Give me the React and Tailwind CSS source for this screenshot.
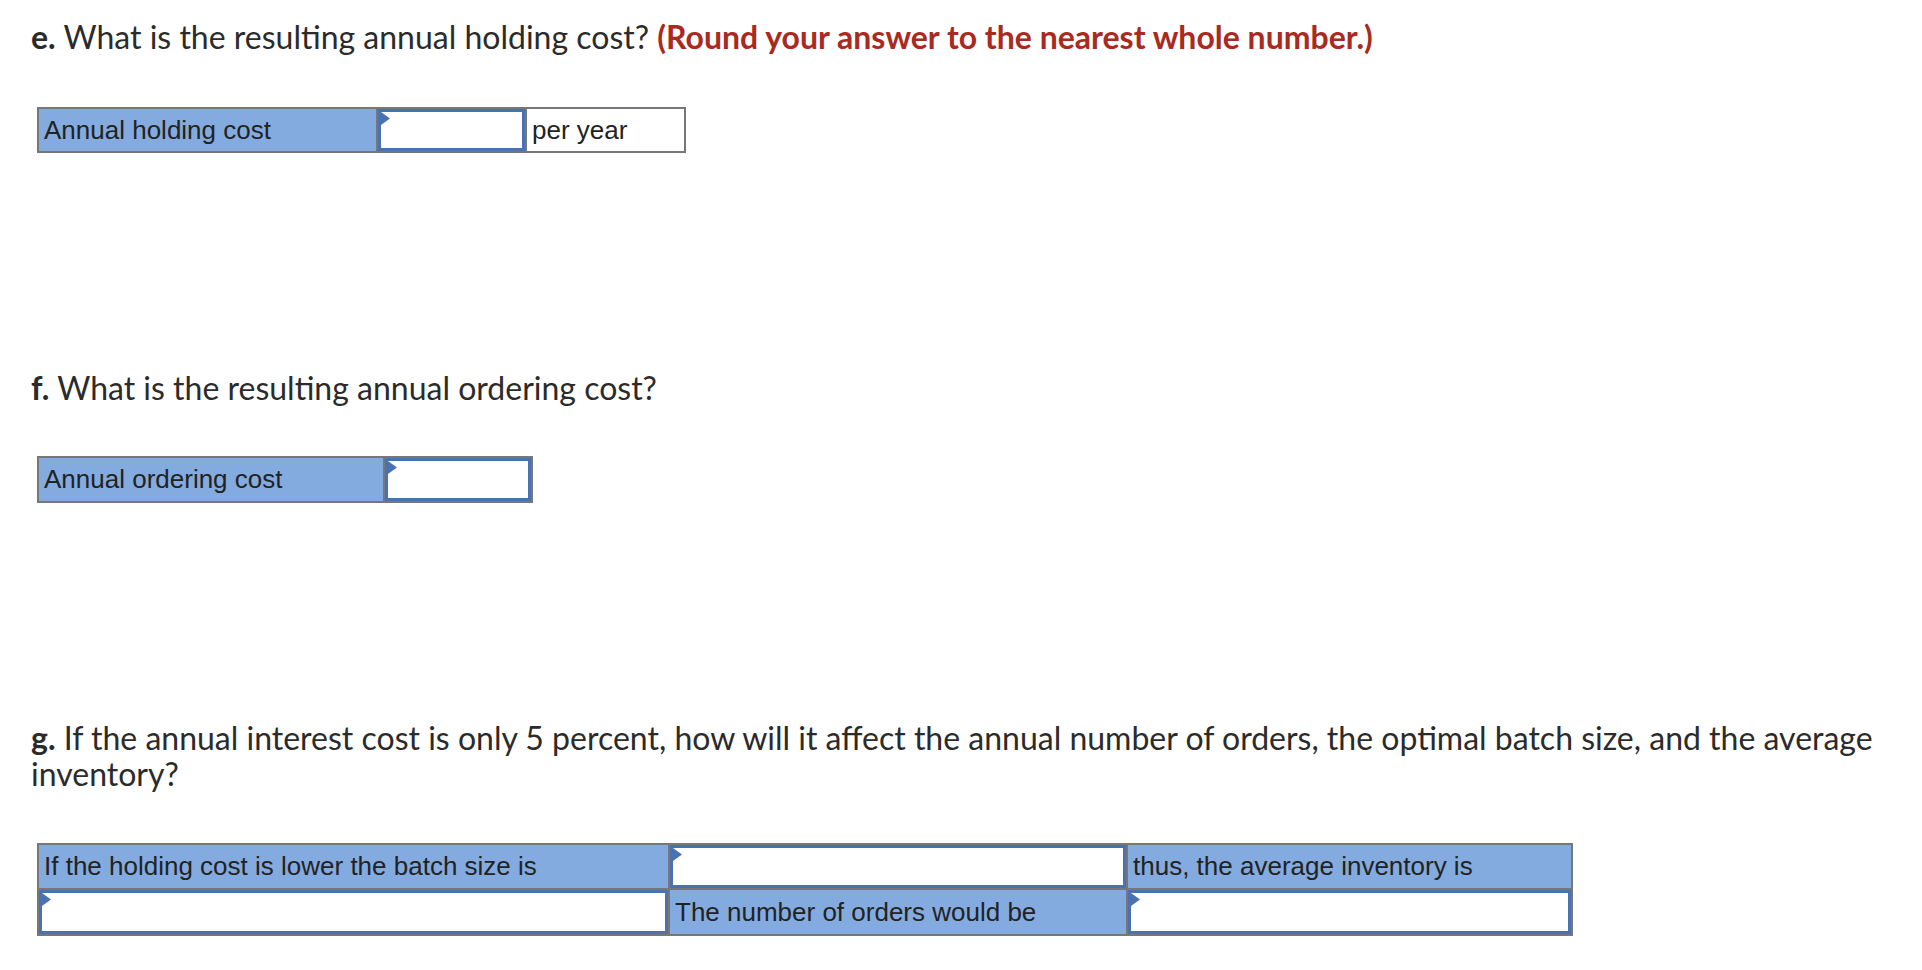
const cellText = "font-['Liberation_Sans',Arial,sans-serif] text-[26px] text-[#222]";

function Label({ children, className = "" }) {
  return (
    <div className={`flex items-center bg-[#84abdf] border-2 border-[#777] pl-[5px] ${cellText} ${className}`}>
      {children}
    </div>
  );
}

function Input({ className = "" }) {
  return (
    <div className={`relative bg-white border-2 border-[#777] ${className}`}>
      <div className="absolute inset-0 border-[3px] border-[#4a72b2]" />
      <svg className="absolute left-[3px] top-[3px]" width="9" height="13" viewBox="0 0 9 13">
        <polygon points="0,0 9,6.5 0,13" fill="#4a72b2" />
      </svg>
    </div>
  );
}

function Heading({ letter, children }) {
  return (
    <p className="font-['Lato','Open_Sans',sans-serif] text-[32px] leading-[36px] text-[#2b2b2b]">
      <span className="font-bold">{letter}</span> {children}
    </p>
  );
}

export default function App() {
  return (
    <div className="min-h-screen bg-white pl-[31px] pr-[31px] pt-[19px]">
      <Heading letter="e.">
        What is the resulting annual holding cost?{" "}
        <span className="font-bold text-[#a82a20]">(Round your answer to the nearest whole number.)</span>
      </Heading>

      <div className="mt-[52px] ml-[6px] flex h-[46px]">
        <Label className="w-[341px]">Annual holding cost</Label>
        <Input className="w-[151px] -ml-[2px]" />
        <div className={`flex items-center w-[161px] -ml-[2px] bg-white border-2 border-[#777] pl-[5px] ${cellText}`}>
          per year
        </div>
      </div>

      <div className="mt-[217px]">
        <Heading letter="f.">What is the resulting annual ordering cost?</Heading>
      </div>

      <div className="mt-[50px] ml-[6px] flex h-[47px]">
        <Label className="w-[348px]">Annual ordering cost</Label>
        <Input className="w-[150px] -ml-[2px]" />
      </div>

      <div className="mt-[217px]">
        <Heading letter="g.">
          If the annual interest cost is only 5 percent, how will it affect the annual number of orders, the optimal batch size, and the average inventory?
        </Heading>
      </div>

      <div className="mt-[51px] ml-[6px] grid grid-cols-[633px_458px_445px] grid-rows-[47px_46px] w-fit">
        <Label>If the holding cost is lower the batch size is</Label>
        <Input className="-ml-[2px]" />
        <Label className="-ml-[2px]">thus, the average inventory is</Label>
        <Input className="-mt-[2px]" />
        <Label className="-ml-[2px] -mt-[2px]">The number of orders would be</Label>
        <Input className="-ml-[2px] -mt-[2px]" />
      </div>
    </div>
  );
}
